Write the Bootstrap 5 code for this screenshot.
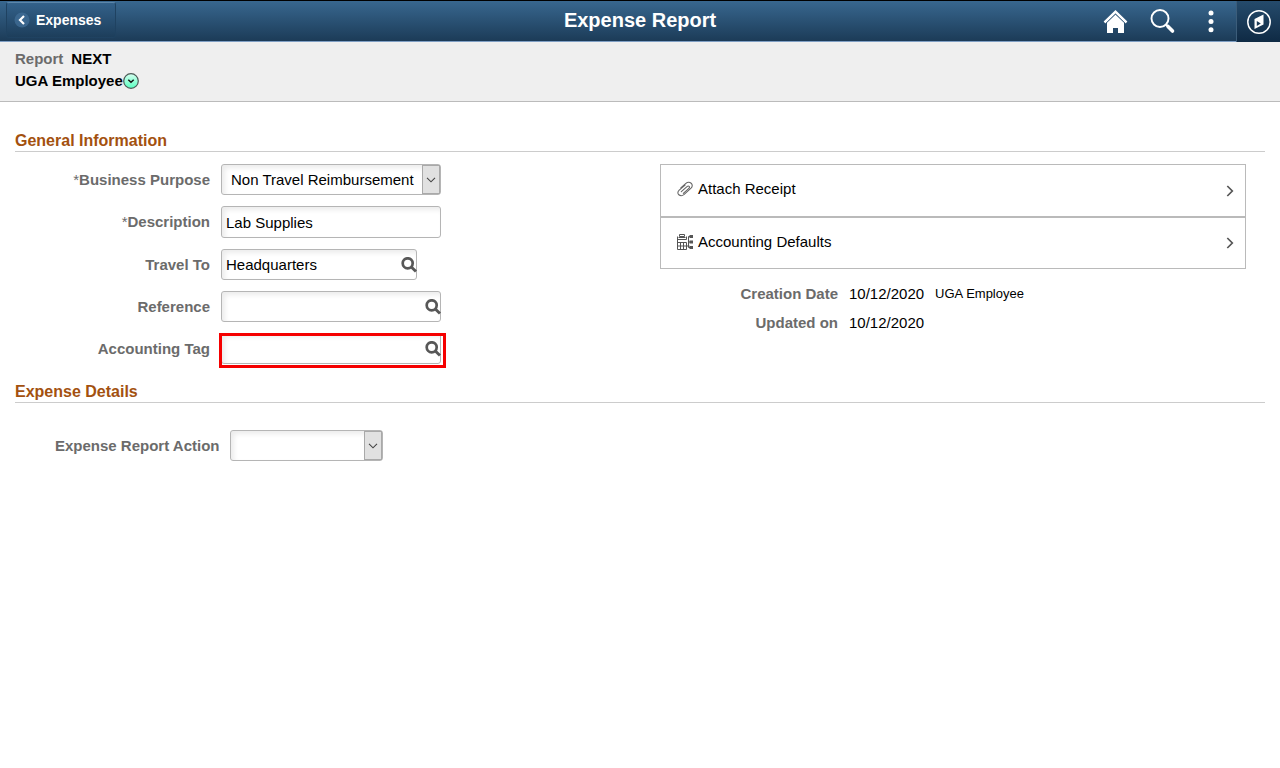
<!DOCTYPE html>
<html lang="en">
<head>
<meta charset="utf-8">
<meta name="viewport" content="width=device-width, initial-scale=1">
<title>Expense Report</title>
<link href="https://cdn.jsdelivr.net/npm/bootstrap@5.3.0/dist/css/bootstrap.min.css" rel="stylesheet">
<style>
body { font-family: "Liberation Sans", Arial, sans-serif; font-size: 15px; line-height: 22px; color: #000; background: #fff; }
svg { display: block; flex: none; }
main { padding: 28px 15px; }
.topbar { height: 42px; border-top: 1px solid #000; background: linear-gradient(#38678f, #1b3a56); }
.topbar-side { flex: 1 1 0; height: 41px; border-bottom: 1px solid #7f9fc4; }
.topbar h1 { font-size: 20px; line-height: 39px; height: 41px; color: #fff; border-bottom: 1px solid #7f9fc4; }
.back-btn { height: 36px; width: 110px; margin: 1px 0 0 6px; padding: 0 0 0 7px; gap: 6px; color: #fff; font-size: 14px; font-weight: bold; border: 1px solid #1f4261; border-top-color: #5c86aa; border-radius: 3px; background: linear-gradient(#33618a, #1d3e5b); }
.bar-btn { width: 48px; height: 40px; padding: 0; border: 0; background: none; color: #fff; }
.nav-btn { width: 44px; height: 41px; margin-left: 1px; border-left: 1px solid #3c5d7a; background: linear-gradient(#254b6c, #0f2a44); }
.subhead { height: 60px; padding: 6px 15px 0; background: #efefef; border-bottom: 1px solid #bbb; font-weight: bold; }
.caption-gray, .field-label { color: #6b6b6b; font-weight: bold; }
.icon-only { padding: 0; border: 0; background: none; }
.section-title { font-size: 16px; line-height: 21px; font-weight: bold; color: #a3510f; border-bottom: 1px solid #ccc; margin: 0 0 12px; }
.block-next { margin-top: 17px; }
.fields { gap: 11px; }
.field-row { gap: 11px; }
.field-label { width: 195px; text-align: right; }
.field-label i { font-style: normal; font-weight: normal; }
.entry { position: relative; width: 220px; }
.entry-narrow { width: 196px; }
.entry-action { width: 153px; }
.entry .form-control, .entry .form-select { height: 31px; padding: 0 4px; font-size: 15px; line-height: 20px; color: #000; border: 1px solid #b5b5b5; border-radius: 3px; background: #fff; box-shadow: inset 3px 3px 5px #ececec; }
.entry .form-select { padding: 0 18px 0 9px; }
.entry .tall { height: 32px; }
.drop-face { position: absolute; top: 1px; right: 1px; bottom: 1px; width: 18px; background: #e1e1e1; border: 1px solid #a9a9a9; pointer-events: none; }
.lookup { position: absolute; top: 8px; right: 0; }
.flagged::after { content: ""; position: absolute; inset: 0 -5px -4px -2px; border: 3px solid #f50000; pointer-events: none; }
.side-panel { padding-left: 20px; padding-right: 19px; }
.link-row { height: 53px; padding: 0 11px 3px 15px; gap: 4px; border: 1px solid #bababa; border-radius: 0; background: #fff; color: #000; text-decoration: none; }
.link-row + .link-row { height: 52px; }
.link-arrow { margin-top: 3px; }
.stamp { gap: 11px; }
.stamp .field-label { width: 178px; }
.stamp-list { gap: 7px; margin-top: 14px; }
.stamp-user { font-size: 13px; }
.action-row { padding: 15px 0 0 40px; }
.action-row .field-label { width: auto; }
</style>
</head>
<body>
<header class="topbar d-flex">
  <div class="topbar-side">
    <button type="button" class="back-btn d-flex align-items-center">
      <svg width="16" height="16" viewBox="0 0 16 16"><circle cx="8" cy="8" r="7.500" fill="#43709a" opacity=".7"/><path d="M10 4 6 8l4 4" fill="none" stroke="#fff" stroke-width="2.200"/></svg>
      Expenses
    </button>
  </div>
  <h1 class="m-0 fw-bold">Expense Report</h1>
  <div class="topbar-side d-flex justify-content-end">
    <button type="button" class="bar-btn d-flex align-items-center justify-content-center" aria-label="Home">
      <svg width="26" height="26" viewBox="0 0 26 26"><path d="m2.500 14.500 11-10.700 11 10.700" fill="none" stroke="#fff" stroke-width="2.500"/><path d="M13.500 6.500 5 14.500V25h6v-5h5v5h6V14.500z" fill="#fff"/><path d="m3.500 15.700 10-9.700 10 9.700" fill="none" stroke="#2c5273" stroke-width=".7"/></svg>
    </button>
    <button type="button" class="bar-btn d-flex align-items-center justify-content-center" aria-label="Search">
      <svg width="26" height="26" viewBox="0 0 26 26"><circle cx="10" cy="10.500" r="8.500" fill="none" stroke="#fff" stroke-width="1.900"/><path d="m16 16.500 2 2" stroke="#fff" stroke-width="2"/><path d="m18 18.500 4.500 4.500" stroke="#fff" stroke-width="3.600" stroke-linecap="round"/></svg>
    </button>
    <button type="button" class="bar-btn d-flex align-items-center justify-content-center" aria-label="Actions">
      <svg width="6" height="24" viewBox="0 0 6 24" fill="#fff"><circle cx="3" cy="4" r="2.500"/><circle cx="3" cy="12.500" r="2.500"/><circle cx="3" cy="20.800" r="2.500"/></svg>
    </button>
    <button type="button" class="bar-btn nav-btn d-flex align-items-center justify-content-center" aria-label="NavBar">
      <svg width="24" height="24" viewBox="0 0 24 24"><circle cx="12" cy="12" r="11.200" fill="none" stroke="#fff" stroke-width="1.500"/><path fill="#fff" fill-rule="evenodd" d="M16.500 4.500v10l-9 4.500V9zM9.800 11v5l4-2.500z"/></svg>
    </button>
  </div>
</header>
<section class="subhead">
  <div class="d-flex"><span class="caption-gray me-2">Report</span><span>NEXT</span></div>
  <div class="d-flex align-items-center">UGA Employee
    <button type="button" class="icon-only" aria-label="Related actions">
      <svg width="16" height="16" viewBox="0 0 16 16"><defs><linearGradient id="mint" x2="0" y2="1"><stop stop-color="#d6fff0"/><stop offset="1" stop-color="#58ffc0"/></linearGradient></defs><circle cx="8" cy="8" r="7.300" fill="url(#mint)" stroke="#4c5b57" stroke-width="1.200"/><path d="m5.300 6.800 2.700 2.500 2.700-2.500" fill="none" stroke="#111" stroke-width="1.500"/></svg>
    </button>
  </div>
</section>
<svg width="0" height="0" class="position-absolute" aria-hidden="true">
  <symbol id="lens" viewBox="0 0 16 16"><circle cx="6.700" cy="6.300" r="5" fill="none" stroke="#575757" stroke-width="2.700"/><path d="m10.300 10 4.700 4.500" stroke="#575757" stroke-width="3"/></symbol>
  <symbol id="down" viewBox="0 0 10 6"><path d="m1 .8 4 4 4-4" fill="none" stroke="#444" stroke-width="1.100"/></symbol>
  <symbol id="next" viewBox="0 0 8 12"><path d="m1.300 1 5 5-5 5" fill="none" stroke="#555" stroke-width="1.700"/></symbol>
</svg>
<main>
  <section>
    <h2 class="section-title">General Information</h2>
    <div class="row g-0">
      <div class="col-6 d-flex flex-column fields">
        <div class="field-row d-flex align-items-center">
          <label class="field-label" for="purpose"><i>*</i>Business Purpose</label>
          <div class="entry"><select id="purpose" class="form-select"><option>Non Travel Reimbursement</option></select><span class="drop-face d-flex align-items-center justify-content-center"><svg width="10" height="6"><use href="#down"/></svg></span></div>
        </div>
        <div class="field-row d-flex align-items-center">
          <label class="field-label" for="descr"><i>*</i>Description</label>
          <div class="entry"><input id="descr" class="form-control tall" value="Lab Supplies"></div>
        </div>
        <div class="field-row d-flex align-items-center">
          <label class="field-label" for="travel">Travel To</label>
          <div class="entry entry-narrow"><input id="travel" class="form-control" value="Headquarters"><button type="button" class="icon-only lookup" aria-label="Look up Travel To"><svg width="16" height="16"><use href="#lens"/></svg></button></div>
        </div>
        <div class="field-row d-flex align-items-center">
          <label class="field-label" for="refer">Reference</label>
          <div class="entry"><input id="refer" class="form-control"><button type="button" class="icon-only lookup" aria-label="Look up Reference"><svg width="16" height="16"><use href="#lens"/></svg></button></div>
        </div>
        <div class="field-row d-flex align-items-center">
          <label class="field-label" for="tag">Accounting Tag</label>
          <div class="entry flagged"><input id="tag" class="form-control"><button type="button" class="icon-only lookup" aria-label="Look up Accounting Tag"><svg width="16" height="16"><use href="#lens"/></svg></button></div>
        </div>
      </div>
      <div class="col-6 side-panel">
        <a href="#" class="link-row d-flex align-items-center">
          <svg width="18" height="18" viewBox="0 0 18 18" fill="none" stroke="#666" stroke-width="1.100" stroke-linecap="round"><path d="M4.800 7.800 9.600 3.600c4-3.300 9 .8 5.400 4.600L8.200 14.400c-3.900 3.300-8.700-.9-5-4.300l5.900-5"/><path d="M5.300 11.700 11 6.600c1.700-1.400 3.400.3 1.900 1.700l-5.600 5"/></svg>
          <span class="flex-grow-1">Attach Receipt</span>
          <svg class="link-arrow" width="8" height="12"><use href="#next"/></svg>
        </a>
        <a href="#" class="link-row d-flex align-items-center">
          <svg width="18" height="18" viewBox="0 0 18 18" fill="none" stroke="#555"><path d="M3.500 1.500h5v2h-5zM1.500 3.500v13h9v-7h-9M1.500 6.500h9v-3M2.500 4.500h7M4.500 9.500v7M7.500 9.500v7M1.500 13h12M12.500 3.500v11M12.500 3.500h2M12.500 9h2M12.500 14.500h2"/><path fill="#555" stroke="none" d="M13.500 2h3.500v3h-3.500zM13.500 7.500h3.500v3h-3.500zM13.500 13h3.500v3h-3.500z"/></svg>
          <span class="flex-grow-1">Accounting Defaults</span>
          <svg class="link-arrow" width="8" height="12"><use href="#next"/></svg>
        </a>
        <div class="stamp-list d-flex flex-column">
          <div class="stamp d-flex"><span class="field-label">Creation Date</span><span>10/12/2020</span><span class="stamp-user">UGA Employee</span></div>
          <div class="stamp d-flex"><span class="field-label">Updated on</span><span>10/12/2020</span></div>
        </div>
      </div>
    </div>
  </section>
  <section class="block-next">
    <h2 class="section-title">Expense Details</h2>
    <div class="field-row action-row d-flex align-items-center">
      <label class="field-label" for="action">Expense Report Action</label>
      <div class="entry entry-action"><select id="action" class="form-select"><option></option></select><span class="drop-face d-flex align-items-center justify-content-center"><svg width="10" height="6"><use href="#down"/></svg></span></div>
    </div>
  </section>
</main>
<script src="https://cdn.jsdelivr.net/npm/bootstrap@5.3.0/dist/js/bootstrap.bundle.min.js"></script>
</body>
</html>
